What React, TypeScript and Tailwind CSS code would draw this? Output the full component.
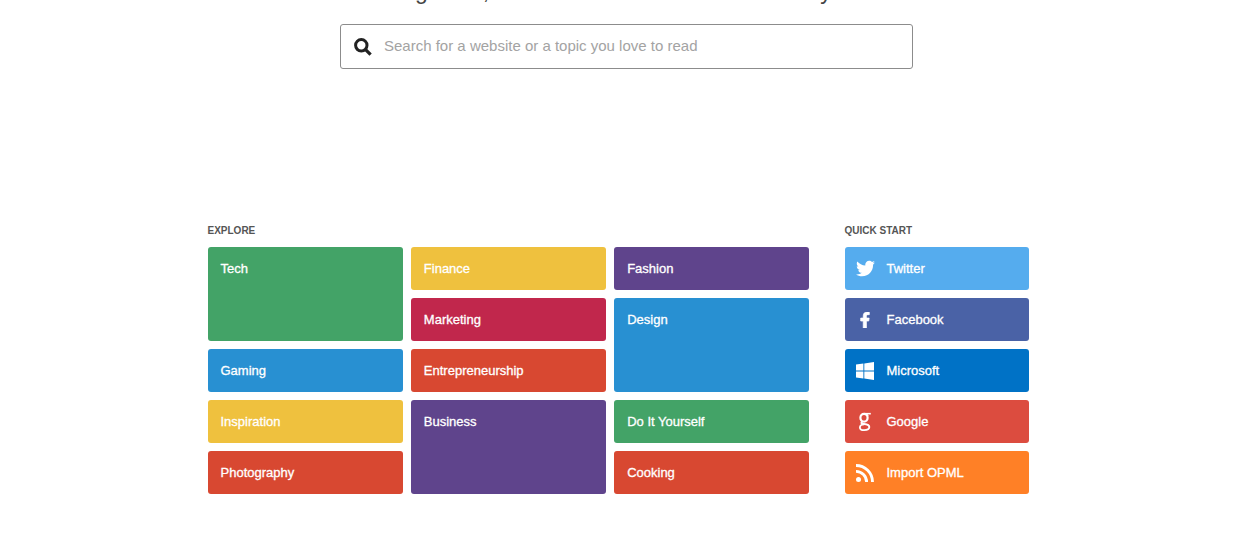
import type { ReactNode } from 'react';
import { FaFacebookF, FaTwitter } from 'react-icons/fa';

type Topic = { name: string; color: string; tall?: boolean };

type Source = { name: string; color: string; icon: ReactNode };

const WindowsIcon = () => (
  <svg viewBox="0 0 18 18" className="size-[18px]" fill="currentColor" aria-hidden="true">
    <path d="M0 2.5 7.4 1.5V8.5H0zM8.3 1.4 18 0V8.5H8.3zM0 9.4H7.4V16.5L0 15.5zM8.3 9.4H18V18L8.3 16.6z" />
  </svg>
);

const GoogleIcon = () => (
  <svg viewBox="0 0 14 20" className="h-5 w-3.5" fill="none" stroke="currentColor" aria-hidden="true">
    <ellipse cx="6" cy="5.8" rx="3.6" ry="3.9" strokeWidth="2.2" />
    <path d="M6 1.7H12.8" strokeWidth="1.6" />
    <path d="M8.8 2.6 10 4.2" strokeWidth="1.6" />
    <path d="M4.4 9.4C2.4 11.2 3.8 11.9 6.2 12.1C9 12.3 11.3 13 11.3 15.2" strokeWidth="2" />
    <path d="M6.2 12.3C3.6 12.3 1.9 13.6 1.9 15.4C1.9 17.2 3.6 18.2 6.2 18.2C9.2 18.2 11.3 17 11.3 15" strokeWidth="1.8" />
  </svg>
);

const RssIcon = () => (
  <svg viewBox="0 0 18 18" className="size-[18px]" fill="none" stroke="currentColor" aria-hidden="true">
    <circle cx="2.5" cy="15.5" r="2.5" fill="currentColor" stroke="none" />
    <path d="M0 7.4A10.6 10.6 0 0 1 10.6 18M0 1.5A16.5 16.5 0 0 1 16.5 18" strokeWidth="2.9" />
  </svg>
);

const SearchIcon = () => (
  <svg viewBox="0 0 18 18" className="size-[18px]" fill="none" stroke="currentColor" aria-hidden="true">
    <circle cx="7.3" cy="7.3" r="5.7" strokeWidth="3" />
    <path d="M11.6 11.6 16.6 16.6" strokeWidth="3.2" />
  </svg>
);

const topicColumns: Topic[][] = [
  [
    { name: 'Tech', color: 'bg-[#43a367]', tall: true },
    { name: 'Gaming', color: 'bg-[#2890d2]' },
    { name: 'Inspiration', color: 'bg-[#efc13e]' },
    { name: 'Photography', color: 'bg-[#d84831]' },
  ],
  [
    { name: 'Finance', color: 'bg-[#efc13e]' },
    { name: 'Marketing', color: 'bg-[#c1274c]' },
    { name: 'Entrepreneurship', color: 'bg-[#d84831]' },
    { name: 'Business', color: 'bg-[#5f448c]', tall: true },
  ],
  [
    { name: 'Fashion', color: 'bg-[#5f448c]' },
    { name: 'Design', color: 'bg-[#2890d2]', tall: true },
    { name: 'Do It Yourself', color: 'bg-[#43a367]' },
    { name: 'Cooking', color: 'bg-[#d84831]' },
  ],
];

const sources: Source[] = [
  { name: 'Twitter', color: 'bg-[#55acee]', icon: <FaTwitter className="size-[19px]" /> },
  { name: 'Facebook', color: 'bg-[#4a62a6]', icon: <FaFacebookF className="size-4 stroke-current stroke-[24]" /> },
  { name: 'Microsoft', color: 'bg-[#0072c6]', icon: <WindowsIcon /> },
  { name: 'Google', color: 'bg-[#dc4c3f]', icon: <GoogleIcon /> },
  { name: 'Import OPML', color: 'bg-[#ff8026]', icon: <RssIcon /> },
];

const SearchBar = () => (
  <label className="mx-auto mt-[18px] flex h-[45px] w-full max-w-[573px] items-center gap-3 rounded-[3px] border border-[#8c8c8c] px-[13px] text-[#222]">
    <SearchIcon />
    <input
      type="text"
      aria-label="Search"
      placeholder="Search for a website or a topic you love to read"
      className="min-w-0 flex-1 bg-transparent text-[15px] outline-none placeholder:text-[#a3a3a3]"
    />
  </label>
);

const App = () => {
  return (
    <main className="overflow-hidden bg-white pb-14 pl-[3px] font-['Liberation_Sans',Arial,sans-serif]">
      {/* Headline, scrolled past the top edge */}
      <h1 className="-mt-6 text-center text-[23px] leading-[30px] text-[#444]">
        Organize, read and share what matters to you.
      </h1>

      <SearchBar />

      <div className="mx-auto mt-[154px] flex w-full max-w-[838px] gap-[35px] pr-[17px]">
        <section className="flex-1">
          <h2 className="mb-2 text-[10px] font-bold leading-4 text-[#555]">EXPLORE</h2>
          <div className="grid grid-cols-3 gap-2">
            {topicColumns.map((topics, i) => (
              <div key={i} className="flex flex-col gap-2">
                {topics.map((topic) => (
                  <a
                    key={topic.name}
                    href="#"
                    className={`rounded-[3px] p-[13px] text-[13px] leading-[17px] text-white [-webkit-text-stroke:0.3px] ${topic.color} ${topic.tall ? 'h-[94px]' : 'h-[43px]'}`}
                  >
                    {topic.name}
                  </a>
                ))}
              </div>
            ))}
          </div>
        </section>

        <section className="w-[184px]">
          <h2 className="mb-2 text-[10px] font-bold leading-4 text-[#555]">QUICK START</h2>
          <div className="flex flex-col gap-2">
            {sources.map((source) => (
              <a
                key={source.name}
                href="#"
                className={`flex h-[43px] items-center gap-3 rounded-[3px] px-[11px] text-[13px] leading-[17px] text-white ${source.color}`}
              >
                <span className="flex w-[19px] justify-center">{source.icon}</span>
                <span className="[-webkit-text-stroke:0.3px]">{source.name}</span>
              </a>
            ))}
          </div>
        </section>
      </div>
    </main>
  );
};

export default App;
